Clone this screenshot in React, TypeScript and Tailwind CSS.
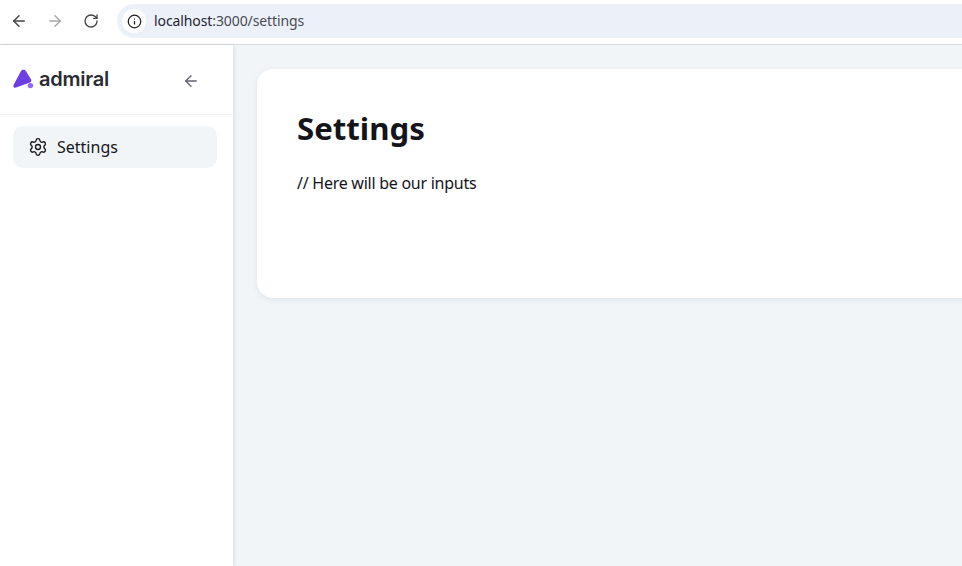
import { ArrowLeft, ArrowRight, Info, RotateCw, Settings } from 'lucide-react';
import React from 'react';

const uiFont = "font-['Noto_Sans',sans-serif]";

const BrowserBar: React.FC = () => {
  return (
    <div className="flex h-[45px] shrink-0 items-start border-b border-[#dcdcdc] bg-white">
      <div className="flex h-[41px] items-center gap-[18px] pl-[10px]">
        <ArrowLeft size={18} strokeWidth={2} className="text-[#474747]" />
        <ArrowRight size={18} strokeWidth={2} className="text-[#a8a8a8]" />
        <RotateCw size={16} strokeWidth={2} className="ml-[1px] text-[#474747]" />
      </div>
      <div className="ml-[18px] mt-[4px] flex h-[34px] flex-1 items-center rounded-l-full bg-[#ecf1f9] pl-[5px]">
        <div className="flex h-[24px] w-[24px] items-center justify-center rounded-full bg-white">
          <Info size={15} strokeWidth={2} className="text-[#1f1f1f]" />
        </div>
        <span className="ml-[8px] text-[14px] leading-[18px] tracking-[-0.1px] text-[#1f2430]">
          localhost<span className="text-[#474b52]">:3000/settings</span>
        </span>
      </div>
    </div>
  );
};

const Logo: React.FC = () => {
  return (
    <div className="flex items-center">
      <svg width="21" height="20" viewBox="0 0 21 20">
        <path
          d="M8 2C9 .2 11.8 .2 12.8 2L18 10.2C18.8 11.6 18.2 13 17 13.4L3 18.6C1 19.3-.2 17.5 .7 15.8Z"
          fill="#6d3fe0"
        />
        <circle cx="17.4" cy="16.6" r="2.7" fill="#9466f5" />
      </svg>
      <span className="ml-[5px] font-['Inter',sans-serif] text-[20px] font-semibold leading-none tracking-[-0.25px] text-[#2b2b33]">
        admiral
      </span>
    </div>
  );
};

const Sidebar: React.FC = () => {
  return (
    <aside className="z-10 flex w-[233px] shrink-0 flex-col bg-white shadow-[1px_0_4px_rgba(30,50,80,0.12)]">
      <div className="flex h-[70px] items-center justify-between border-b border-[#f1f3f6] pb-[2px] pl-[13px] pr-[33px]">
        <Logo />
        <ArrowLeft size={18} strokeWidth={1.75} className="mt-[5px] text-[#5f6070]" />
      </div>
      <nav className="px-[13px] pt-[11px]">
        <div className="flex h-[42px] w-[204px] items-center rounded-[10px] bg-[#f1f5f8] pl-[15px]">
          <Settings size={20} strokeWidth={1.6} className="text-[#16161d]" />
          <span className="ml-[9px] text-[16px] text-[#16161d]">Settings</span>
        </div>
      </nav>
    </aside>
  );
};

export default function App() {
  return (
    <div className={`flex h-screen w-full flex-col overflow-hidden bg-white ${uiFont}`}>
      <BrowserBar />
      <div className="flex min-h-0 flex-1">
        <Sidebar />
        <main className="min-w-0 flex-1 overflow-hidden bg-[#f1f5f8] pl-[24px] pt-[24px]">
          <div className="h-[229px] w-[900px] rounded-[16px] bg-white px-[40px] pt-[37px] shadow-[0_2px_6px_rgba(30,50,80,0.08)]">
            <h1 className="text-[31.2px] font-bold leading-[44px] text-[#14141b]">Settings</h1>
            <p className="mt-[22px] text-[16px] leading-[22px] tracking-[-0.26px] text-[#14141b]">// Here will be our inputs</p>
          </div>
        </main>
      </div>
    </div>
  );
}
